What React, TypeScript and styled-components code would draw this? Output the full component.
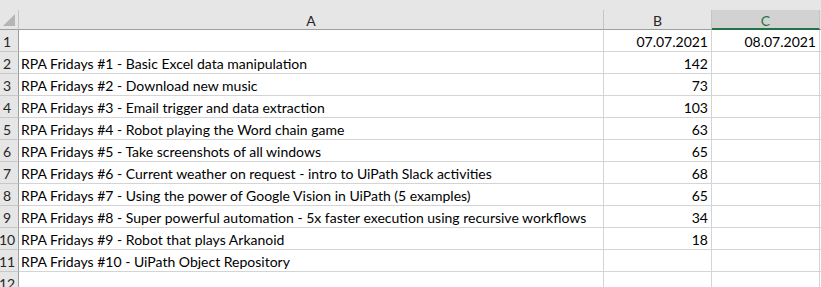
import styled, { createGlobalStyle } from 'styled-components';

const GlobalStyle = createGlobalStyle`
  html, body {
    margin: 0;
    padding: 0;
    background: #ffffff;
    overflow: hidden;
  }
`;

const ROWS = [
  { a: '', b: '07.07.2021', c: '08.07.2021' },
  { a: 'RPA Fridays #1 - Basic Excel data manipulation', b: '142', c: '' },
  { a: 'RPA Fridays #2 - Download new music', b: '73', c: '' },
  { a: 'RPA Fridays #3 - Email trigger and data extraction', b: '103', c: '' },
  { a: 'RPA Fridays #4 - Robot playing the Word chain game', b: '63', c: '' },
  { a: 'RPA Fridays #5 - Take screenshots of all windows', b: '65', c: '' },
  {
    a: 'RPA Fridays #6 - Current weather on request - intro to UiPath Slack activities',
    b: '68',
    c: '',
  },
  {
    a: 'RPA Fridays #7 - Using the power of Google Vision in UiPath (5 examples)',
    b: '65',
    c: '',
  },
  {
    a: 'RPA Fridays #8 - Super powerful automation - 5x faster execution using recursive workflows',
    b: '34',
    c: '',
  },
  { a: 'RPA Fridays #9 - Robot that plays Arkanoid', b: '18', c: '' },
  { a: 'RPA Fridays #10 - UiPath Object Repository', b: '', c: '' },
  { a: '', b: '', c: '' },
];

const COLUMNS = ['A', 'B', 'C'];

const Wrapper = styled.div`
  width: 821px;
  height: 287px;
  overflow: hidden;
  background: #e6e6e6;
  font-family: Lato, 'Liberation Sans', sans-serif;
  font-size: 14px;
  color: #000000;
`;

const TopBand = styled.div`
  height: 10px;
  background: #e6e6e6;
`;

const Sheet = styled.div`
  display: grid;
  grid-template-columns: 19px 585px 108px 108px 1fr;
  grid-auto-rows: 22px;
  grid-template-rows: 20px;
  background: #ffffff;
`;

const Corner = styled.div`
  position: relative;
  background: #e6e6e6;
  border-right: 1px solid #c4c4c4;
  border-bottom: 1px solid #9e9e9e;
  svg {
    position: absolute;
    left: 3px;
    top: 4px;
  }
`;

const ColHeader = styled.div<{ $selected?: boolean }>`
  display: flex;
  align-items: center;
  justify-content: center;
  background: ${({ $selected }) => ($selected ? '#d2d2d2' : '#e6e6e6')};
  color: ${({ $selected }) => ($selected ? '#217346' : '#262626')};
  border-right: 1px solid #c4c4c4;
  border-bottom: ${({ $selected }) =>
    $selected ? '2px solid #217346' : '1px solid #9e9e9e'};
  padding-top: ${({ $selected }) => ($selected ? '3px' : '2px')};
`;

const HeaderFiller = styled.div`
  background: #e6e6e6;
  border-bottom: 1px solid #9e9e9e;
`;

const RowHeader = styled.div`
  display: flex;
  align-items: center;
  justify-content: center;
  padding: 1px 4px 0 0;
  background: #e6e6e6;
  color: #262626;
  border-right: 1px solid #9e9e9e;
  border-bottom: 1px solid #c8c8c8;
  white-space: nowrap;
`;

const Cell = styled.div<{ $align?: 'left' | 'right' }>`
  display: flex;
  align-items: center;
  justify-content: ${({ $align }) =>
    $align === 'right' ? 'flex-end' : 'flex-start'};
  padding: 1px 3px 0 2px;
  border-right: 1px solid #d4d4d4;
  border-bottom: 1px solid #d4d4d4;
  white-space: nowrap;
  overflow: hidden;
`;

const Filler = styled.div`
  border-bottom: 1px solid #d4d4d4;
`;

export default function App() {
  return (
    <>
      <GlobalStyle />
      <Wrapper>
        <TopBand />
        <Sheet>
          <Corner>
            <svg width="12" height="12" viewBox="0 0 12 12">
              <polygon points="12,0 12,12 0,12" fill="#b5b5b5" />
            </svg>
          </Corner>
          {COLUMNS.map((col) => (
            <ColHeader key={col} $selected={col === 'C'}>
              {col}
            </ColHeader>
          ))}
          <HeaderFiller />
          {ROWS.map((row, i) => (
            <>
              <RowHeader key={`h${i}`}>{i + 1}</RowHeader>
              <Cell key={`a${i}`}>{row.a}</Cell>
              <Cell key={`b${i}`} $align="right">
                {row.b}
              </Cell>
              <Cell key={`c${i}`} $align="right">
                {row.c}
              </Cell>
              <Filler key={`f${i}`} />
            </>
          ))}
        </Sheet>
      </Wrapper>
    </>
  );
}
